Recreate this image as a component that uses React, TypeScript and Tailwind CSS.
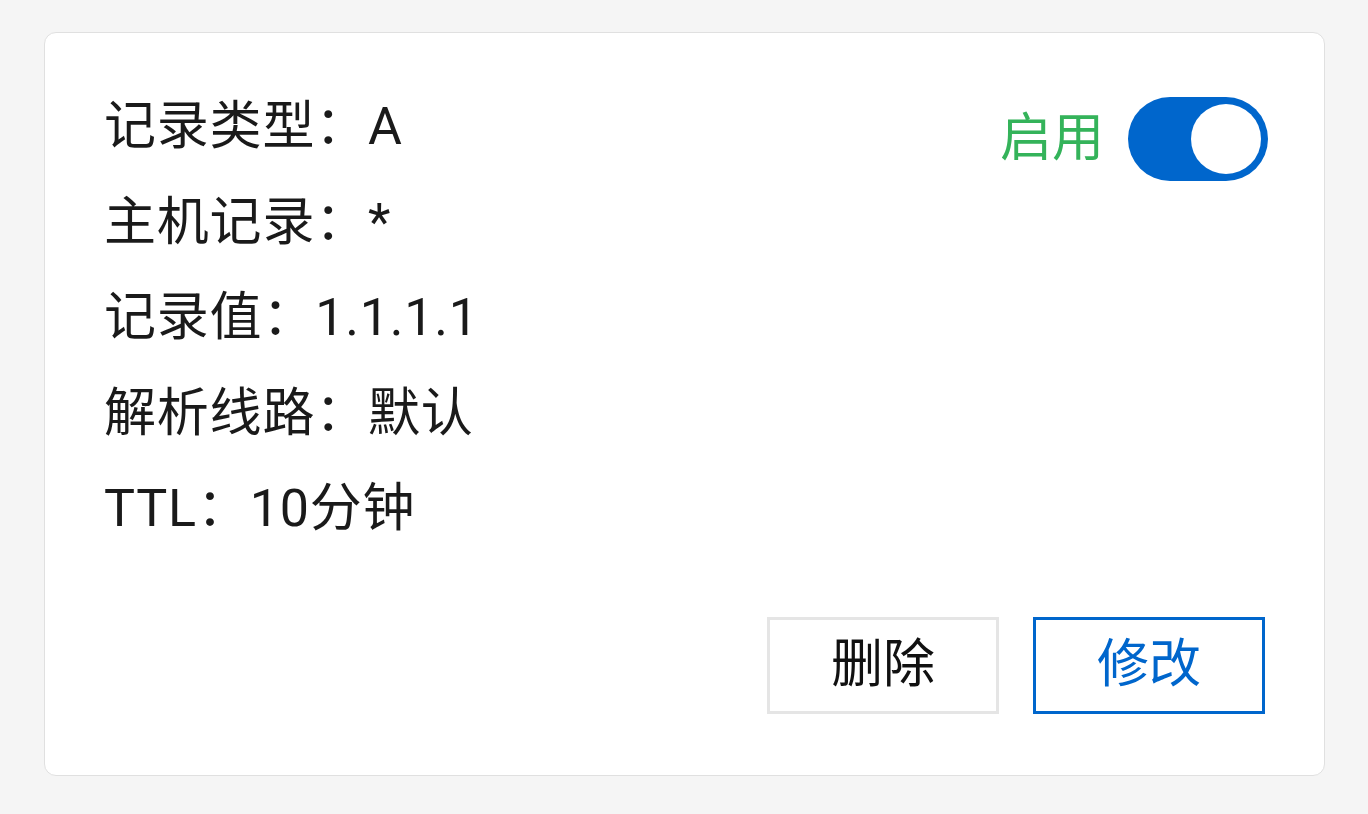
import React from 'react';

const rows = [
  { label: '记录类型', value: 'A' },
  { label: '主机记录', value: '*' },
  { label: '记录值', value: '1.1.1.1' },
  { label: '解析线路', value: '默认' },
  { label: 'TTL', value: '10分钟' },
];

function Toggle({ on }: { on: boolean }) {
  return (
    <div
      className={
        'flex h-[84px] w-[140px] items-center rounded-full p-[7px] ' +
        (on ? 'justify-end bg-[#0066cc]' : 'justify-start bg-[#cccccc]')
      }
    >
      <div className="h-[70px] w-[70px] rounded-full bg-white" />
    </div>
  );
}

export default function App() {
  return (
    <div
      className="min-h-screen bg-[#f5f5f5] pt-[32px] pl-[44px] pr-[43px]"
      style={{ fontFamily: "Roboto, 'Noto Sans CJK SC', sans-serif" }}
    >
      <div className="rounded-[12px] border border-[#e0e0e0] bg-white px-[59px] pt-[46px] pb-[61px]">
        <div className="flex items-start justify-between">
          <div className="text-[52px] leading-[95.5px] tracking-[0.8px] text-[#1a1a1a]">
            {rows.map((r) => (
              <div key={r.label}>
                {r.label}：{r.value}
              </div>
            ))}
          </div>
          <div className="mt-[18px] mr-[-3px] flex items-center gap-[24px]">
            <span className="ml-[2px] text-[52px] leading-none text-[#34b35a]">启用</span>
            <Toggle on />
          </div>
        </div>
        <div className="mt-[60px] flex justify-end gap-[34px]">
          <button className="flex h-[97px] w-[232px] items-center justify-center border-[3px] border-[#e5e5e5] bg-white text-[52px] text-[#111]">
            删除
          </button>
          <button className="flex h-[97px] w-[232px] items-center justify-center border-[3px] border-[#0066cc] bg-white text-[52px] text-[#0066cc]">
            修改
          </button>
        </div>
      </div>
    </div>
  );
}
